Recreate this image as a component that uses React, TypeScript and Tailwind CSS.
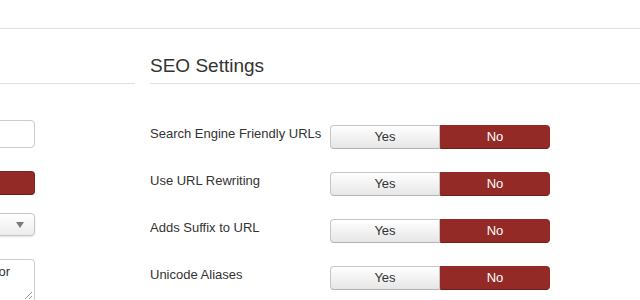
import React from "react";

function Toggle() {
  return (
    <div className="flex h-[24px] w-[220px] text-[13px] leading-[18px]">
      <div className="flex w-[110px] items-center justify-center rounded-l-[4px] border border-[#c5c5c5] border-b-[#b3b3b3] bg-gradient-to-b from-white to-[#e6e6e6] text-[#333] shadow-[inset_0_1px_0_rgba(255,255,255,0.2)]">
        Yes
      </div>
      <div className="flex w-[110px] items-center justify-center rounded-r-[4px] border border-[#942a25] border-b-[#6e1e1b] bg-[#942a25] text-white">
        No
      </div>
    </div>
  );
}

function Row({ label }: { label: string }) {
  return (
    <div className="flex items-start">
      <div className="w-[180px] text-[13px] leading-[18px] text-[#333]">{label}</div>
      <Toggle />
    </div>
  );
}

export default function App() {
  return (
    <div
      className="relative h-[300px] w-[640px] overflow-hidden bg-white"
      style={{ fontFamily: '"Liberation Sans", Arial, sans-serif' }}
    >
      <div className="h-[29px] border-b border-[#e0e0e0]" />
      <div className="flex gap-[15px]">
        <div className="w-[135px] shrink-0">
          <div className="h-[55px] border-b border-[#e0e0e0]" />
          <div className="ml-[-200px] w-[235px]">
            <div className="mt-[36px] h-[28px] rounded-[4px] border border-[#cccccc] bg-white" />
            <div className="mt-[23px] h-[24px] rounded-[4px] border border-[#7e2420] border-b-[#6a1c19] bg-[#942a25]" />
            <div className="relative mt-[18px] flex h-[23px] items-center justify-end rounded-[4px] border border-[#c5c5c5] bg-gradient-to-b from-white to-[#ececec] pr-[10px] shadow-[0_1px_2px_rgba(0,0,0,0.12)]">
              <svg width="8" height="6" viewBox="0 0 8 6">
                <path d="M0 0 L8 0 L4 6 Z" fill="#7a7a7a" />
              </svg>
            </div>
            <div className="relative mt-[23px] h-[60px] rounded-[4px] border border-[#cccccc] bg-white">
              <div className="flex justify-end pr-[24px] pt-[3px] text-[13px] leading-[18px] text-[#333]">
                <span>or</span>
              </div>
              <svg width="9" height="9" viewBox="0 0 9 9" className="absolute right-[1px] top-[31px]">
                <path d="M8 1 L1 8 M8 5 L5 8" stroke="#9a9a9a" strokeWidth="1" />
              </svg>
            </div>
          </div>
        </div>
        <div className="min-w-0 flex-1">
          <div className="flex h-[55px] items-end border-b border-[#e0e0e0] pb-[5px]">
            <h3 className="text-[19px] font-normal leading-[24px] text-[#333]">SEO Settings</h3>
          </div>
          <div className="mt-[41px] flex flex-col gap-[23px]">
            <Row label="Search Engine Friendly URLs" />
            <Row label="Use URL Rewriting" />
            <Row label="Adds Suffix to URL" />
            <Row label="Unicode Aliases" />
          </div>
        </div>
      </div>
    </div>
  );
}
